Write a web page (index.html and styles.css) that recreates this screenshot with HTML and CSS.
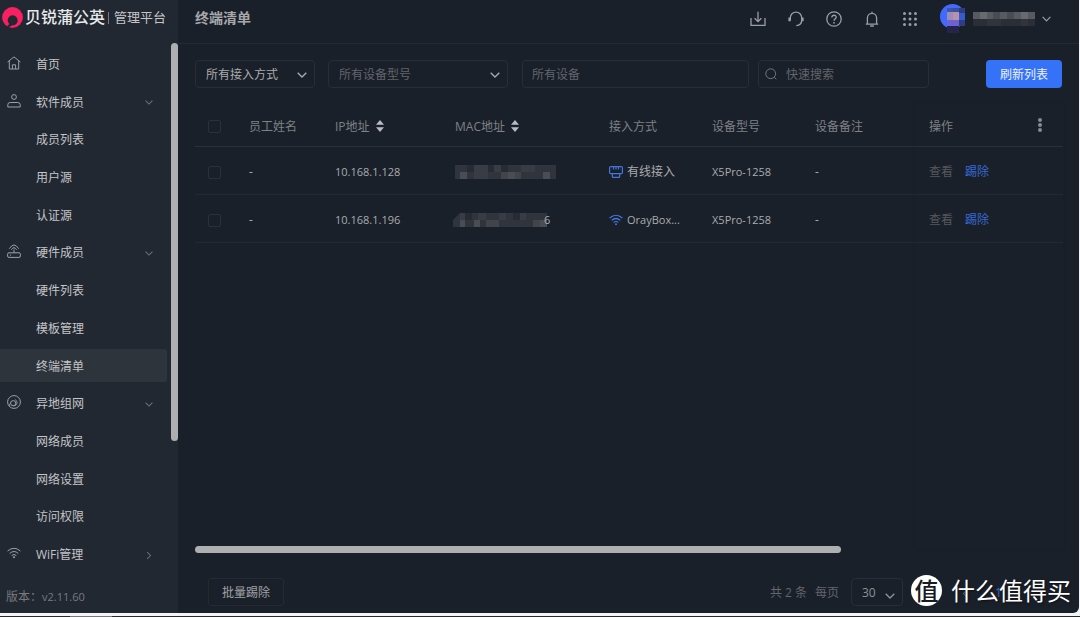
FILE: index.html
```html
<!DOCTYPE html>
<html lang="zh-CN">
<head>
<meta charset="utf-8">
<meta name="viewport" content="width=device-width, initial-scale=1">
<title>终端清单</title>
<link rel="stylesheet" href="styles.css">
</head>
<body>
<svg class="defs" aria-hidden="true">
  <symbol id="chev" viewBox="0 0 10 6"><path d="M.7.7 5 5 9.3.7"/></symbol>
  <symbol id="sort" viewBox="0 0 8 12"><path d="M4 0 8 4.7H0zM4 12 0 7.3h8z"/></symbol>
  <symbol id="wifi" viewBox="0 0 14 11"><path d="M.6 3.5Q7-2 13.4 3.5M2.7 5.9Q7 2.1 11.3 5.9M4.7 8Q7 6 9.3 8"/><circle class="dot" cx="7" cy="9.7" r="1"/></symbol>
</svg>
<div class="app">
  <aside class="sidebar">
    <div class="brand">
      <svg class="brand-mark" viewBox="0 0 21 21"><circle cx="10.5" cy="10.5" r="10.4" fill="#f81f62"/><path fill="#222831" d="M4.900 19.500 7.300 17.100A5 5 0 1 1 11.600 18.300Q9.200 18.300 8.400 19.300 7 20.500 4.900 19.500z"/></svg>
      <strong class="brand-name">贝锐蒲公英</strong>
      <span class="brand-sub">管理平台</span>
    </div>
    <nav class="menu">
      <a href="#"><svg class="icon" viewBox="0 0 14 14"><path d="M.6 6 7 .9 13.4 6M2.3 5v8h9.400V5M5.400 13V8.800h3.200V13"/></svg>首页</a>
      <a href="#"><svg class="icon" viewBox="0 0 14 14"><circle cx="7" cy="3" r="2.4"/><path d="M.8 13v-2.300q0-2.200 2.400-2.200h7.600q2.400 0 2.400 2.200V13z"/></svg>软件成员<svg class="arrow"><use href="#chev"/></svg></a>
      <a href="#">成员列表</a>
      <a href="#">用户源</a>
      <a href="#">认证源</a>
      <a href="#"><svg class="icon" viewBox="0 0 14 14"><rect x=".6" y="8.8" width="12.800" height="4.600" rx="1.400"/><path d="M7 8.800V5.400M2.300 4.700q4.700-7.400 9.400 0M4.400 5.700q2.600-4 5.200 0M3 11.100h1"/></svg>硬件成员<svg class="arrow"><use href="#chev"/></svg></a>
      <a href="#">硬件列表</a>
      <a href="#">模板管理</a>
      <a href="#" class="active" aria-current="page">终端清单</a>
      <a href="#"><svg class="icon" viewBox="0 0 14 14"><circle cx="7" cy="7" r="6.400"/><circle cx="6.200" cy="8.200" r="2.600"/><path d="M2.600 11.600C2.100 10 2.600 8.700 3.600 8.200M6.500 10.800C10.500 10.800 11 6.500 8.300 4.600"/></svg>异地组网<svg class="arrow"><use href="#chev"/></svg></a>
      <a href="#">网络成员</a>
      <a href="#">网络设置</a>
      <a href="#">访问权限</a>
      <a href="#"><svg class="icon" viewBox="0 0 14 11"><use href="#wifi"/></svg>WiFi管理<svg class="arrow right"><use href="#chev"/></svg></a>
    </nav>
    <div class="version">版本：<span class="latin">v2.11.60</span></div>
    <div class="side-scroll"></div>
  </aside>

  <main class="main">
    <header class="topbar">
      <h1>终端清单</h1>
      <div class="tools">
        <button aria-label="下载"><svg viewBox="0 0 16 16"><path d="M1 7v7.300h14V7M8 .8v9.600M4.600 7.200 8 10.600l3.400-3.400"/></svg></button>
        <button aria-label="客服"><svg viewBox="0 0 16 16"><path d="M2.300 9V6.800a5.700 5.700 0 0 1 11.400 0V9c0 3.500-2.200 5.400-5.400 5.700"/><path stroke-width="2.400" d="M1.600 6.400v3.800M14.400 6.400v3.800"/></svg></button>
        <button aria-label="帮助"><svg viewBox="0 0 16 16"><circle cx="8" cy="8" r="7.200"/><path d="M5.800 6.500C5.800 3.400 10.300 3.600 10.200 6.300 10.100 8 8 7.800 8 9.800"/><circle class="dot" cx="8" cy="11.800" r=".9"/></svg></button>
        <button aria-label="通知"><svg viewBox="0 0 16 16"><path d="M1.800 13.200h12.400M3.400 13V7a4.600 4.600 0 0 1 9.200 0v6M8 2.300V.8M6.200 15h3.600"/></svg></button>
        <button aria-label="应用"><svg viewBox="0 0 16 16"><path class="dots" d="M2.500 2.500h0M8 2.500h0M13.500 2.500h0M2.500 8h0M8 8h0M13.500 8h0M2.500 13.500h0M8 13.500h0M13.500 13.500h0"/></svg></button>
        <button class="account" aria-label="账户">
          <svg class="avatar" viewBox="0 0 26 30"><circle cx="12.500" cy="12.500" r="12.500" fill="#416aff"/><path fill="#384fa5" d="M13 4h12v5h-6v13h-6z"/><path fill="#2f3d83" d="M19 4h6v5h-6zM19 16h6v6h-6z"/><path fill="#355bd0" d="M19 9h6v7h-6z"/><path fill="#9b8cb8" d="M7 8h6v8H7z"/><path fill="#b793a8" d="M13 8h6v8h-6z"/><path fill="#6c62d0" d="M7 16h12v6H7z"/><path fill="#24244d" d="M7 22h12v7H7z"/><path fill="#4254a7" d="M7 4h6v4H7z"/></svg>
          <svg class="masked-name" viewBox="0 0 62 14"><path fill="#575a60" d="M0 0h62v7H0z"/><path fill="#676b70" d="M7 0h7v7H7zM48 0h7v7h-7z"/><path fill="#494c52" d="M20 0h7v7h-7zM34 0h7v7h-7z"/><path fill="#2a2e36" d="M0 7h62v7H0z"/><path fill="#31343b" d="M14 7h14v7H14zM48 7h7v7h-7z"/></svg>
          <svg class="arrow"><use href="#chev"/></svg>
        </button>
      </div>
    </header>

    <form class="filters">
      <label class="field access"><select aria-label="接入方式"><option>所有接入方式</option></select><svg class="arrow"><use href="#chev"/></svg></label>
      <label class="field model"><select aria-label="设备型号"><option>所有设备型号</option></select><svg class="arrow"><use href="#chev"/></svg></label>
      <label class="field device"><input type="text" aria-label="设备" placeholder="所有设备"></label>
      <label class="field search"><svg class="lens" viewBox="0 0 12 12"><circle cx="5.700" cy="5.700" r="4.900"/><path d="m9.300 9.300 2 2"/></svg><input type="text" aria-label="快速搜索" placeholder="快速搜索"></label>
      <button type="button" class="primary">刷新列表</button>
    </form>

    <section class="table-area">
      <table>
        <colgroup><col class="c-check"><col class="c-name"><col class="c-ip"><col class="c-mac"><col class="c-access"><col class="c-model"><col class="c-note"><col></colgroup>
        <thead>
          <tr><th><input type="checkbox" aria-label="全选"></th><th>员工姓名</th><th>IP地址<svg class="sort"><use href="#sort"/></svg></th><th>MAC地址<svg class="sort"><use href="#sort"/></svg></th><th>接入方式</th><th>设备型号</th><th>设备备注</th>
          <th><div class="op-head">操作<button aria-label="更多"><svg viewBox="0 0 4 14"><path d="M2 2h0M2 7h0M2 12h0"/></svg></button></div></th></tr>
        </thead>
        <tbody>
          <tr><td><input type="checkbox" aria-label="选择 10.168.1.128"></td><td>-</td><td class="latin">10.168.1.128</td>
            <td><svg class="mac" viewBox="0 0 101 14"><path fill="#30343d" d="M0 0h101v14H0z"/><path fill="#393c44" d="M19 0h14v14H19zM39 0h7v7h-7zM66 0h14v7H66z"/><path fill="#262b34" d="M12 0h7v7h-7zM33 0h6v7h-6zM46 0h7v7h-7z"/><path fill="#4b4d54" d="M5 7h7v7H5zM53 7h7v7h-7zM88 7h7v7h-7z"/><path fill="#41444b" d="M46 7h7v7h-7zM60 7h6v7h-6z"/></svg></td>
            <td><span class="access-cell"><svg class="blue" viewBox="0 0 14 12"><rect x=".6" y=".6" width="12.800" height="7" rx="1.200"/><path d="M4.500 1v2.600M7 1v2.600M9.500 1v2.600M3.300 7.600v2.800q0 1 1 1h5.400q1 0 1-1V7.600"/></svg>有线接入</span></td>
            <td class="latin">X5Pro-1258</td><td>-</td><td><div class="ops"><a href="#" class="muted">查看</a><a href="#">踢除</a></div></td></tr>
          <tr><td><input type="checkbox" aria-label="选择 10.168.1.196"></td><td>-</td><td class="latin">10.168.1.196</td>
            <td class="latin"><span class="mac-cell"><svg class="mac" viewBox="0 0 94 14"><path fill="#30343d" d="M7 0h87v14H0V7z"/><path fill="#393c44" d="M7 0h5v7H7zM25 0h8v7h-8zM46 0h7v7h-7zM66 0h7v7h-7z"/><path fill="#262b34" d="M12 0h7v7h-7zM60 0h7v7h-7z"/><path fill="#4b4d54" d="M7 7h5v7H7zM21 7h6v7h-6zM87 7h7v7h-7z"/><path fill="#41444b" d="M33 7h13v7H33zM80 7h7v7h-7z"/></svg><span class="tail">6</span></span></td>
            <td class="latin"><span class="access-cell"><svg class="blue" viewBox="0 0 14 11"><use href="#wifi"/></svg>OrayBox...</span></td>
            <td class="latin">X5Pro-1258</td><td>-</td><td><div class="ops"><a href="#" class="muted">查看</a><a href="#">踢除</a></div></td></tr>
        </tbody>
      </table>
      <div class="fixed-col"></div>
      <div class="h-scroll"></div>
    </section>

    <footer class="pager">
      <button class="batch">批量踢除</button>
      <span class="total">共 2 条</span>
      <span>每页</span>
      <label class="field size"><select aria-label="每页条数"><option>30</option></select><svg class="arrow"><use href="#chev"/></svg></label>
      <span class="pages"><a href="#" class="muted prev" aria-label="上一页"><svg class="arrow"><use href="#chev"/></svg></a><a href="#">1</a></span>
    </footer>
  </main>
</div>
<div class="desk"></div>
<div class="watermark"><span class="seal">值</span><span>什么值得买</span></div>
</body>
</html>
```
FILE: styles.css
```css
* { box-sizing: border-box; }
body {
  margin: 0;
  height: 100vh;
  display: flex;
  flex-direction: column;
  background: #f4f4f4;
  color: #a9abae;
  font: 12px/18px "Open Sans", "Noto Sans CJK SC", sans-serif;
  overflow: hidden;
}
button, input, select { font: inherit; color: inherit; margin: 0; padding: 0; border: 0; background: none; }
a { color: #3769d6; text-decoration: none; }
svg { fill: none; stroke: currentColor; flex: none; }
.defs { position: absolute; width: 0; height: 0; }
.dot { fill: currentColor; stroke: none; }
.muted { color: #55585e; }
.latin { font-size: 11px; }

.app {
  flex: 1;
  min-height: 0;
  display: flex;
  margin-right: 1px;
  background: #1a2029;
  border-radius: 0 0 6px 0;
  overflow: hidden;
}
.desk { height: 1px; margin-top: 3px; background: linear-gradient(90deg, #29292b 70px, #77777a 70px 112px, #29292b 112px); }

.sidebar { position: relative; width: 178px; flex: none; display: flex; flex-direction: column; background: #222831; }
.brand { height: 45px; padding: 0 0 11px 2px; display: flex; align-items: center; color: #e8e9ea; }
.brand-mark { width: 21px; height: 21px; stroke: none; margin-right: 2px; }
.brand-name { font-size: 16px; font-weight: 500; line-height: 20px; }
.brand-sub { margin-left: 3px; padding-left: 6px; font-size: 13px; line-height: 20px; color: #c4c6c9; background: linear-gradient(#777b81, #777b81) 0 60% / 1px 12px no-repeat; }
.menu { flex: 1; display: flex; flex-direction: column; }
.menu a {
  flex: 1;
  display: flex;
  align-items: center;
  margin-right: 11px;
  padding: 2px 14px 0 36px;
  color: #c3c5c8;
  border-radius: 0 4px 4px 0;
  border: solid transparent;
  border-width: 2px 0;
  background-clip: padding-box;
}
.menu a.active { background-color: #2e343c; }
.icon { width: 14px; height: 14px; margin: -4px 15px 0 -29px; color: #9da0a4; }
.arrow { width: 10px; height: 6px; stroke-width: 1.3; }
.menu .arrow { margin-left: auto; width: 8px; height: 5px; color: #6c7076; }
.menu .arrow.right { transform: rotate(-90deg); }
.version { height: 40px; padding: 15px 6px 0; color: #777a7f; }
.side-scroll { position: absolute; top: 43px; right: 0; width: 7px; height: 65%; border-radius: 4px; background: #aeafb0; }

.main { flex: 1; min-width: 0; display: flex; flex-direction: column; }
.topbar { height: 44px; padding: 0 28px 6px 17px; display: flex; align-items: center; border-bottom: 1px solid #242a33; }
h1 { margin: 0; font-size: 14px; line-height: 18px; padding-bottom: 2px; font-weight: 700; color: #a6a8ab; }
.tools { margin-left: auto; display: flex; align-items: center; gap: 22px; color: #9b9ea2; }
.tools button { display: flex; align-items: center; }
.tools button > svg { width: 16px; height: 16px; stroke-width: 1.3; }
.tools .dots { stroke-width: 3; stroke-linecap: round; }
.tools .account { gap: 7px; }
.tools .account .avatar { width: 26px; height: 30px; stroke: none; }
.tools .account .masked-name { width: 62px; height: 14px; stroke: none; }
.tools .account .arrow { width: 9px; height: 6px; }

.filters { display: flex; align-items: center; padding: 16px 17px 0; }
.field { position: relative; height: 28px; display: flex; align-items: center; border: 1px solid #282d36; border-radius: 4px; }
.field select, .field input { width: 100%; height: 100%; padding: 1px 9px 0; appearance: none; outline: 0; }
.field select { padding: 2px 10px 0; }
.field .arrow { position: absolute; right: 7px; top: 11px; pointer-events: none; }
.field input::placeholder { color: #62656b; opacity: 1; }
.access { width: 120px; margin-right: 13px; }
.model { width: 180px; margin-right: 14px; }
.model select { color: #62656b; }
.device { flex: 1; margin-right: 9px; }
.search { width: 171px; margin-right: 57px; }
.lens { width: 12px; height: 12px; margin-left: 6px; color: #74777c; }
.primary { width: 76px; height: 28px; padding-top: 1px; border-radius: 4px; background: #3672f8; color: #eef3ff; }

.table-area { position: relative; flex: 1; margin: 17px 16px 0 17px; }
table { width: 100%; table-layout: fixed; border-collapse: collapse; text-align: left; }
th, td { padding: 4px 0 0; height: 48px; border-bottom: 1px solid #242830; vertical-align: middle; }
th { height: 41px; padding-top: 3px; font-weight: 400; color: #7e8185; border-color: #2b3038; }
th:last-child, td:last-child { padding-left: 14px; }
.c-check { width: 54px; }
.c-name { width: 86px; }
.c-ip { width: 120px; }
.c-mac { width: 154px; }
.c-access, .c-model { width: 103px; }
.c-note { width: 100px; }
input[type=checkbox] { display: block; width: 13px; height: 13px; margin-left: 13px; appearance: none; border: 1px solid #2b3039; border-radius: 2px; }
.sort { width: 8px; height: 12px; margin-left: 6px; fill: #b9bbc4; stroke: none; vertical-align: -1px; }
.op-head { display: flex; align-items: center; justify-content: space-between; padding-right: 21px; }
.op-head button { display: flex; padding-bottom: 4px; }
.op-head svg { width: 4px; height: 14px; color: #898b8f; stroke-width: 4; stroke-linecap: round; }
.mac { display: block; width: 101px; height: 14px; stroke: none; }
.mac-cell { display: flex; align-items: center; }
.mac-cell .mac { width: 94px; margin-left: -2px; }
.tail { margin-left: -3px; }
.access-cell { display: flex; align-items: center; gap: 4px; }
.blue { width: 14px; height: 12px; color: #4475df; stroke-width: 1.2; }
.ops { display: flex; gap: 12px; }
.fixed-col { position: absolute; top: 0; right: 0; bottom: 22px; width: 148px; box-shadow: 0 0 3px #15191f33; pointer-events: none; }
.h-scroll { position: absolute; left: 0; bottom: 18px; width: 646px; max-width: 100%; height: 7px; border-radius: 4px; background: #aeafb0; }

.pager { height: 42px; padding: 7px 17px 0 30px; display: flex; align-items: flex-start; line-height: 30px; color: #62656b; }
.batch { width: 76px; height: 28px; padding-top: 2px; margin-right: auto; border: 1px solid #252a32; border-radius: 3px; color: #a0a2a6; line-height: 18px; }
.total { margin-right: 8px; }
.size { width: 52px; margin-left: 12px; color: #8e9196; line-height: 18px; }
.size .arrow { top: 14px; }
.pages { width: 159px; padding-left: 58px; display: flex; align-items: center; gap: 26px; }
.prev { display: flex; }
.prev .arrow { width: 8px; height: 5px; transform: rotate(90deg); }

.watermark { position: absolute; right: 9px; bottom: 11px; display: flex; align-items: center; gap: 9px; color: #fff; font: 400 24px/32px "Noto Sans CJK SC", sans-serif; text-shadow: 1px 1px 2px #0008; }
.seal { width: 31px; height: 31px; border-radius: 50%; background: #fff; color: #171b22; font-size: 24px; font-weight: 500; line-height: 30px; text-align: center; text-shadow: none; }
```
